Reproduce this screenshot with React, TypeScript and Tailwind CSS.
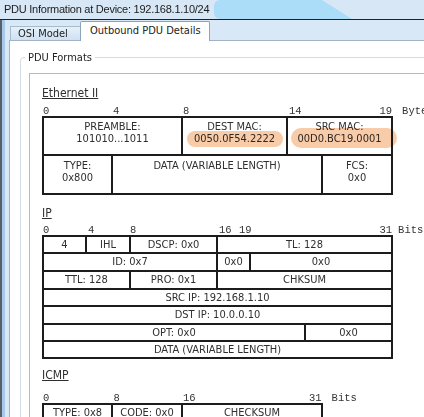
import React from "react";

const B = "border-[#1c1c1c]";

export default function App() {
  return (
    <div className="w-[424px] h-[417px] overflow-hidden bg-white flex flex-col text-[#2f2f2f] [font-family:'DejaVu_Sans_Condensed','DejaVu_Sans',sans-serif] [font-stretch:condensed]">
      {/* Title bar */}
      <div className="relative h-[20px] shrink-0 bg-[#d7e7f6] border-b border-[#1f2328] overflow-hidden">
        <div className="absolute left-[214px] top-0 h-full w-[140px] bg-[#abdcf8] rounded-l-[6px] [clip-path:polygon(0_0,108px_0,138px_100%,0_100%)]" />
        <div className="relative pl-[4px] leading-[19px] text-[11px] [font-family:'Liberation_Sans',sans-serif] [font-stretch:normal] tracking-[-0.25px] text-[#1b1b1b]">
          PDU Information at Device: 192.168.1.10/24
        </div>
      </div>

      <div className="flex flex-1 min-h-0">
        <div className="w-[2px] bg-[#56606a]" />
        <div className="w-[3px] bg-[#a7c8e6]" />
        <div className="flex-1 flex flex-col bg-[#d8e8f6] min-w-0">
          {/* Tabs */}
          <div className="h-[20px] flex items-end pl-[5px] shrink-0">
            <div className="h-[14px] w-[70px] border-t border-l border-[#a8bbcd] bg-gradient-to-b from-[#e6f0f9] to-[#cfe1f3] text-[11px] leading-[13px] pl-[7px] text-[#222]">
              OSI Model
            </div>
            <div className="relative z-10 -mb-px h-[20px] w-[130px] bg-white border border-b-0 border-[#8fa3b7] rounded-t-[2px] text-[11px] leading-[18px] pl-[9px] text-[#222]">
              Outbound PDU Details
            </div>
          </div>

          {/* Panel */}
          <div className="flex-1 ml-[4px] bg-white border-l border-t border-[#a3b3c3] pl-[10px] pt-[16px] overflow-hidden">
            <div className="relative w-[700px] h-[600px] border border-[#d3dce4] rounded-[4px] pl-[8px] pt-[15px]">
              <div className="absolute -top-[7px] left-[4px] px-[3px] bg-white text-[11px] leading-[13px] text-[#222]">
                PDU Formats
              </div>
              <div className="h-full border-l border-t border-[#b9b9b9] pl-[12px] pt-[13px] flex flex-col">
                {/* Ethernet II */}
                <div className="relative">
                  <div className="text-[12px] leading-[13px] underline">Ethernet II</div>
                  <div className="mt-[6px] h-[10px] flex pl-[1px] text-[10.5px] leading-[10px] whitespace-nowrap [font-family:'Liberation_Mono',monospace] [font-stretch:normal] text-[#333]">
                    <span className="w-[70px] shrink-0">0</span>
                    <span className="w-[70px] shrink-0">4</span>
                    <span className="w-[106px] shrink-0">8</span>
                    <span className="w-[90.5px] shrink-0">14</span>
                    <span>19</span>
                    <span className="ml-[10px]">Bytes</span>
                  </div>
                  <div className={`w-[351px] border-l-2 border-t-2 ${B} text-[11px] leading-[12px]`}>
                    <div className={`flex h-[38px] border-b-2 ${B}`}>
                      <div className={`w-[139px] border-r-2 ${B} text-center pt-[3px]`}>PREAMBLE:<br />101010...1011</div>
                      <div className={`w-[105px] border-r-2 ${B} text-center pt-[3px]`}>DEST MAC:<br />0050.0F54.2222</div>
                      <div className={`w-[105px] border-r-2 ${B} text-center pt-[3px]`}>SRC MAC:<br />00D0.BC19.0001</div>
                    </div>
                    <div className={`flex h-[39px] border-b-2 ${B}`}>
                      <div className={`w-[69px] border-r-2 ${B} text-center pt-[4px]`}>TYPE:<br />0x800</div>
                      <div className={`w-[210px] border-r-2 ${B} text-center pt-[4px]`}>DATA (VARIABLE LENGTH)</div>
                      <div className={`w-[70px] border-r-2 ${B} text-center pt-[4px]`}>FCS:<br />0x0</div>
                    </div>
                  </div>
                  {/* highlights */}
                  <div className="absolute left-[145px] top-[44px] w-[96px] h-[16px] rounded-full bg-[#f8c6a0] mix-blend-multiply opacity-90" />
                  <div className="absolute left-[249px] top-[41px] w-[106px] h-[20px] rounded-[11px] bg-[#f8c6a0] mix-blend-multiply opacity-90" />
                </div>

                {/* IP */}
                <div className="mt-[12px]">
                  <div className="text-[12px] leading-[13px] underline">IP</div>
                  <div className="mt-[5px] h-[10px] flex pl-[1px] text-[10.5px] leading-[10px] whitespace-nowrap [font-family:'Liberation_Mono',monospace] [font-stretch:normal] text-[#333]">
                    <span className="w-[45px] shrink-0">0</span>
                    <span className="w-[42px] shrink-0">4</span>
                    <span className="w-[89px] shrink-0">8</span>
                    <span className="w-[20px] shrink-0">16</span>
                    <span className="w-[140.5px] shrink-0">19</span>
                    <span>31</span>
                    <span className="ml-[6px]">Bits</span>
                  </div>
                  <div className={`w-[351px] border-l-2 border-t-2 ${B} text-[11px] leading-[15px] text-center`}>
                    <div className={`flex h-[17px] border-b-2 ${B}`}>
                      <div className={`w-[43px] border-r-2 ${B}`}>4</div>
                      <div className={`w-[44px] border-r-2 ${B}`}>IHL</div>
                      <div className={`w-[87px] border-r-2 ${B}`}>DSCP: 0x0</div>
                      <div className={`w-[175px] border-r-2 ${B}`}>TL: 128</div>
                    </div>
                    <div className={`flex h-[18px] border-b-2 ${B}`}>
                      <div className={`w-[174px] border-r-2 ${B}`}>ID: 0x7</div>
                      <div className={`w-[33px] border-r-2 ${B}`}>0x0</div>
                      <div className={`w-[142px] border-r-2 ${B}`}>0x0</div>
                    </div>
                    <div className={`flex h-[18px] border-b-2 ${B}`}>
                      <div className={`w-[87px] border-r-2 ${B}`}>TTL: 128</div>
                      <div className={`w-[87px] border-r-2 ${B}`}>PRO: 0x1</div>
                      <div className={`w-[175px] border-r-2 ${B}`}>CHKSUM</div>
                    </div>
                    <div className={`flex h-[17px] border-b-2 ${B}`}>
                      <div className={`w-[349px] border-r-2 ${B}`}>SRC IP: 192.168.1.10</div>
                    </div>
                    <div className={`flex h-[18px] border-b-2 ${B}`}>
                      <div className={`w-[349px] border-r-2 ${B}`}>DST IP: 10.0.0.10</div>
                    </div>
                    <div className={`flex h-[17px] border-b-2 ${B}`}>
                      <div className={`w-[262px] border-r-2 ${B}`}>OPT: 0x0</div>
                      <div className={`w-[87px] border-r-2 ${B}`}>0x0</div>
                    </div>
                    <div className={`flex h-[17px] border-b-2 ${B}`}>
                      <div className={`w-[349px] border-r-2 ${B}`}>DATA (VARIABLE LENGTH)</div>
                    </div>
                  </div>
                </div>

                {/* ICMP */}
                <div className="mt-[10px]">
                  <div className="text-[12px] leading-[13px] underline">ICMP</div>
                  <div className="mt-[11px] h-[10px] flex pl-[1px] text-[10.5px] leading-[10px] whitespace-nowrap [font-family:'Liberation_Mono',monospace] [font-stretch:normal] text-[#333]">
                    <span className="w-[70.5px] shrink-0">0</span>
                    <span className="w-[69.5px] shrink-0">8</span>
                    <span className="w-[126px] shrink-0">16</span>
                    <span>31</span>
                    <span className="ml-[10px]">Bits</span>
                  </div>
                  <div className={`w-[281px] border-l-2 border-t-2 ${B} text-[11px] leading-[15px] text-center`}>
                    <div className={`flex h-[17px] border-b-2 ${B}`}>
                      <div className={`w-[69px] border-r-2 ${B}`}>TYPE: 0x8</div>
                      <div className={`w-[70px] border-r-2 ${B}`}>CODE: 0x0</div>
                      <div className={`w-[140px] border-r-2 ${B}`}>CHECKSUM</div>
                    </div>
                  </div>
                </div>
              </div>
            </div>
          </div>
        </div>
      </div>
    </div>
  );
}
